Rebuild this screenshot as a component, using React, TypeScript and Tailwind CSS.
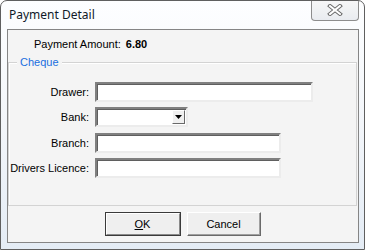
import React from "react";

const sunken =
  "border-2 border-t-[#808080] border-l-[#808080] border-r-[#ececec] border-b-[#ececec] bg-white shadow-[inset_1px_1px_0_#5f5f5f]";

function Field({ label, className, children }: { label: string; className?: string; children: React.ReactNode }) {
  return (
    <div className={`flex items-center h-[20px] ${className ?? ""}`}>
      <span className="w-[81px] text-right pr-[1px]">{label}</span>
      <div className="ml-[5px]">{children}</div>
    </div>
  );
}

export default function App() {
  return (
    <div className="w-[365px] h-[250px] flex flex-col overflow-hidden rounded-t-[7px] border border-[#5f5f5f] bg-gradient-to-b from-[#fdfeff] via-[#f3f6fa] to-[#e4ecf5] font-['Liberation_Sans',Arial,sans-serif] text-[11px] text-black">
      {/* title bar */}
      <div className="h-[28px] shrink-0 flex items-start">
        <span className="ml-[8px] mt-[5px] font-['Noto_Sans',sans-serif] text-[12px] leading-[18px] text-[#101a28]">
          Payment Detail
        </span>
        <div className="ml-auto mr-[5px] -mt-px w-[48px] h-[21px] flex items-center justify-center rounded-b-[4px] border border-t-0 border-[#8d8d8d] bg-gradient-to-b from-[#f7f7f7] to-[#e9ecf0]">
          <svg width="16" height="12" viewBox="0 0 16 12">
            <path d="M3 2 L13 10 M13 2 L3 10" stroke="#6a6a6a" strokeWidth="4" strokeLinecap="square" />
            <path d="M3 2 L13 10 M13 2 L3 10" stroke="#ffffff" strokeWidth="2" strokeLinecap="square" />
          </svg>
        </div>
      </div>

      {/* client area */}
      <div className="ml-[6px] mr-[5px] h-[214px] shrink-0 flex flex-col border border-[#858585] bg-[#f4f4f4]">
        <div className="h-[32px] pl-[26px] pt-[8px] leading-[13px] flex">
          <span>Payment Amount:</span>
          <span className="ml-[5px] font-bold">6.80</span>
        </div>

        <div className="relative mr-[1px] h-[144px] border border-[#d3d3d3] shadow-[inset_1px_1px_0_#ffffff]">
          <span className="absolute -top-[8px] left-[8px] px-[3px] bg-[#f4f4f4] text-[#1a6ee0] leading-[14px]">
            Cheque
          </span>
          <div className="pt-[19px] flex flex-col gap-[5px]">
            <Field label="Drawer:">
              <div className={`${sunken} w-[218px] h-[20px]`} />
            </Field>
            <Field label="Bank:">
              <div className={`${sunken} w-[93px] h-[20px] flex justify-end items-stretch p-[1px]`}>
                <div className="w-[13px] flex items-center justify-center border border-t-white border-l-white border-r-[#696969] border-b-[#696969] bg-[#f0f0f0]">
                  <svg width="7" height="4" viewBox="0 0 7 4">
                    <path d="M0 0 H7 L3.5 4 Z" fill="#000" />
                  </svg>
                </div>
              </div>
            </Field>
            <Field label="Branch:" className="mt-[1px]">
              <div className={`${sunken} w-[186px] h-[20px]`} />
            </Field>
            <Field label="Drivers Licence:">
              <div className={`${sunken} w-[186px] h-[20px]`} />
            </Field>
          </div>
        </div>

        <div className="mt-[6px] flex justify-center gap-[6px] pr-[1px]">
          <button className="w-[76px] h-[24px] border border-[#3a3a3a] p-0">
            <div className="h-full flex items-center justify-center border border-t-white border-l-white border-r-[#8a8a8a] border-b-[#8a8a8a] bg-[#efefef]">
              <span>
                <span className="underline">O</span>K
              </span>
            </div>
          </button>
          <button className="w-[74px] h-[24px] flex items-center justify-center border border-t-[#ffffff] border-l-[#ffffff] border-r-[#6a6a6a] border-b-[#6a6a6a] bg-[#efefef] shadow-[inset_-1px_-1px_0_#a0a0a0]">
            Cancel
          </button>
        </div>
      </div>
    </div>
  );
}
